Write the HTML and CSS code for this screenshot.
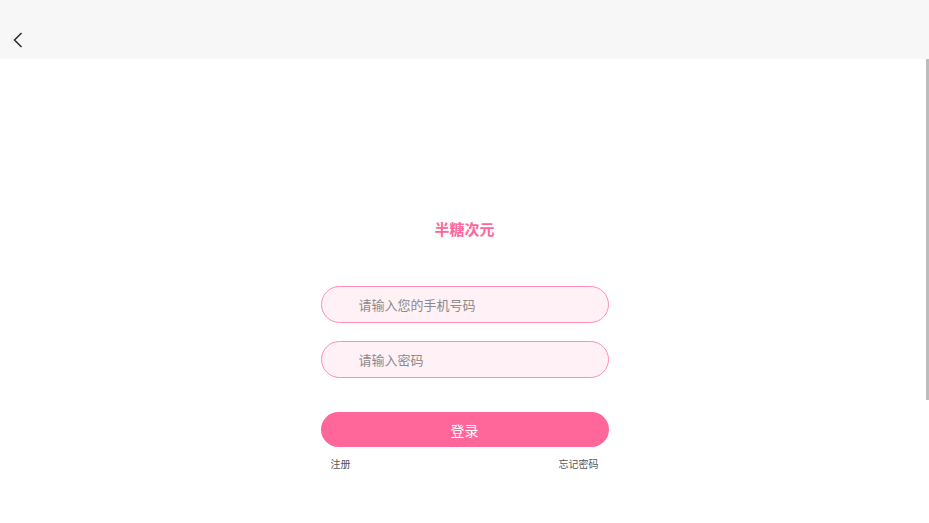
FILE: index.html
```html
<!DOCTYPE html>
<html lang="zh">
<head>
<meta charset="utf-8">
<title>半糖次元</title>
<link rel="stylesheet" href="styles.css">
</head>
<body>
<header class="topbar">
  <button class="back" aria-label="返回">
    <svg width="12" height="18" viewBox="0 0 12 18"><path d="M9.5 2 L2.5 9 L9.5 16" fill="none" stroke="#222" stroke-width="1.4"/></svg>
  </button>
</header>
<main class="page">
  <h1 class="title">半糖次元</h1>
  <form class="form">
    <input class="field" type="text" placeholder="请输入您的手机号码">
    <input class="field" type="password" placeholder="请输入密码">
    <button class="submit" type="button">登录</button>
    <div class="links">
      <a class="link">注册</a>
      <a class="link">忘记密码</a>
    </div>
  </form>
</main>
<div class="scroll-thumb"></div>
</body>
</html>
```
FILE: styles.css
```css
html, body {
  margin: 0;
  padding: 0;
  background: #fff;
  font-family: "Noto Sans CJK SC", "Noto Sans", sans-serif;
}
.topbar {
  height: 59px;
  background: #f7f7f7;
  display: flex;
  align-items: flex-end;
  padding-left: 12px;
}
.back {
  border: 0;
  background: none;
  padding: 0;
  margin-bottom: 10px;
  width: 14px;
  height: 18px;
  display: flex;
}
.page {
  padding-top: 160px;
}
.title {
  margin: 0;
  text-align: center;
  font-size: 15px;
  line-height: 20px;
  font-weight: 700;
  color: #ff6699;
}
.form {
  width: 288px;
  margin: 47px auto 0;
  display: flex;
  flex-direction: column;
}
.field {
  box-sizing: border-box;
  height: 37px;
  border: 1px solid #ff8db4;
  border-radius: 19px;
  background: #fff1f6;
  padding: 0 0 0 37px;
  font-family: inherit;
  font-size: 13px;
  color: #333;
  outline: none;
}
.field::placeholder {
  color: #8a8a8a;
}
.field + .field {
  margin-top: 18px;
}
.submit {
  margin-top: 34px;
  height: 35px;
  border: 0;
  border-radius: 18px;
  background: #ff6699;
  color: #fff;
  font-family: inherit;
  font-size: 14px;
}
.links {
  display: flex;
  justify-content: space-between;
  padding: 0 10px;
  margin-top: 10px;
  font-size: 10px;
  line-height: 14px;
  color: #555;
}
.scroll-thumb {
  position: fixed;
  right: 0;
  top: 59px;
  width: 3px;
  height: 341px;
  background: #bcbcbc;
}
```
